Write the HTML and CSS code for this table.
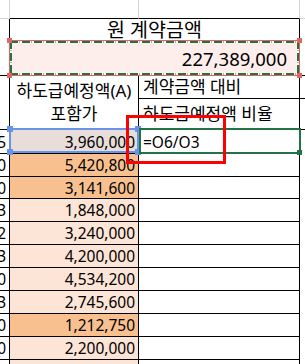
FILE: index.html
```html
<!DOCTYPE html>
<html lang="ko">
<head>
<meta charset="utf-8">
<link rel="stylesheet" href="styles.css">
</head>
<body>
<div class="sheet">
  <div class="grid">
    <div class="c top t0"></div>
    <div class="c top t1"></div>
    <div class="c top t2"></div>
    <div class="c top t3"></div>

    <div class="c lead r2"></div>
    <div class="c title span2">원 계약금액</div>
    <div class="c edge r2"></div>
    <div class="c total span2"><span class="big">227,389,000</span></div>

    <div class="c lead r2"></div>
    <div class="c head r2">하도급예정액(A)<br>포함가</div>
    <div class="c sub">계약금액 대비</div>
    <div class="c edge"></div>
    <div class="c sub">하도급예정액 비율</div>
    <div class="c edge"></div>

    <div class="c lead num">5</div><div class="c amt sel">3,960,000</div><div class="c sub formula">=O6/O3</div><div class="c side"></div>
    <div class="c lead num">0</div><div class="c amt dark">5,420,800</div><div class="c"></div><div class="c side"></div>
    <div class="c lead num">0</div><div class="c amt dark">3,141,600</div><div class="c"></div><div class="c side"></div>
    <div class="c lead num">3</div><div class="c amt light">1,848,000</div><div class="c"></div><div class="c side"></div>
    <div class="c lead num">2</div><div class="c amt light">3,240,000</div><div class="c"></div><div class="c side"></div>
    <div class="c lead num">3</div><div class="c amt light">4,200,000</div><div class="c"></div><div class="c side"></div>
    <div class="c lead num">0</div><div class="c amt light">4,534,200</div><div class="c"></div><div class="c side"></div>
    <div class="c lead num">3</div><div class="c amt light">2,745,600</div><div class="c"></div><div class="c side"></div>
    <div class="c lead num">0</div><div class="c amt dark">1,212,750</div><div class="c"></div><div class="c side"></div>
    <div class="c lead num">0</div><div class="c amt light">2,200,000</div><div class="c"></div><div class="c side"></div>
    <div class="c lead num"></div><div class="c amt light"></div><div class="c"></div><div class="c side"></div>
  </div>

  <div class="copy">
    <span class="hd hd-tl"></span><span class="hd hd-tr"></span>
    <span class="hd hd-bl"></span><span class="hd hd-br"></span>
  </div>
  <div class="ref">
    <span class="bh bh-tl"></span><span class="bh bh-tr"></span>
    <span class="bh bh-bl"></span><span class="bh bh-br"></span>
  </div>
  <div class="active"><span class="fill"></span></div>
  <div class="mark"></div>
</div>
</body>
</html>
```

FILE: styles.css
```css
html, body {
  margin: 0;
  padding: 0;
  background: #fff;
}
body {
  font-family: "Noto Sans", "Noto Sans CJK KR", sans-serif;
  color: #000;
}
.sheet {
  position: relative;
  width: 305px;
  height: 364px;
  overflow: hidden;
}
.grid {
  display: grid;
  grid-template-columns: 10px 129px 161px 5px;
  grid-template-rows: 19px 23px 34px 23px 31px 24px 23px 22px 23px 23px 23px 23px 23px 23px 23px 23px;
}
.c {
  box-sizing: border-box;
  display: flex;
  align-items: center;
  overflow: hidden;
  white-space: nowrap;
  border-right: 1px solid #000;
  border-bottom: 1px solid #000;
  font-size: 15.5px;
  line-height: 20px;
}
.top { border-color: #d4d4d4; }
.t1, .t2 { border-bottom-color: #000; }
.t3 { border-right: 0; }
.r2 { grid-row: span 2; }
.span2 { grid-column: span 2; }
.edge { border-right: 0; }
.side { border-right: 0; border-bottom: 0; }
.c.title {
  justify-content: center;
  font-size: 19.5px;
  line-height: 20px;
  overflow: visible;
}
.c.total {
  justify-content: flex-end;
  padding-right: 12px;
  background: #fdeeec;
}
.big {
  font-size: 18.5px;
  line-height: 24px;
}
.c.head {
  flex-direction: column;
  justify-content: center;
  text-align: center;
  font-size: 17px;
  line-height: 23px;
  padding-bottom: 1px;
}
.c.sub {
  padding-left: 4px;
  font-size: 17px;
}
.c.formula { font-size: 15.5px; }
.num, .amt {
  justify-content: flex-end;
  padding-right: 3px;
}
.dark { background: #f8c08f; }
.light { background: #fce4d6; }
.sel { background: #e8ddd9; }

/* copy marquee around the merged total cell */
.copy {
  position: absolute;
  left: 9px;
  top: 40px;
  width: 291px;
  height: 36px;
  box-sizing: border-box;
  border: 1px solid #e0625f;
  background:
    repeating-linear-gradient(90deg, #217346 0 8px, #fff 8px 9px, #b0b0b0 9px 10px, #fff 10px 12px) top left / 100% 2px no-repeat,
    repeating-linear-gradient(90deg, #217346 0 8px, #fff 8px 9px, #b0b0b0 9px 10px, #fff 10px 12px) bottom left / 100% 2px no-repeat,
    repeating-linear-gradient(180deg, #217346 0 8px, #fff 8px 9px, #b0b0b0 9px 10px, #fff 10px 12px) top left / 2px 100% no-repeat,
    repeating-linear-gradient(180deg, #217346 0 8px, #fff 8px 9px, #b0b0b0 9px 10px, #fff 10px 12px) top right / 2px 100% no-repeat;
}
.hd {
  position: absolute;
  width: 5px;
  height: 5px;
  background: #e06666;
}
.hd-tl { left: -3px; top: -3px; }
.hd-tr { right: -3px; top: -3px; }
.hd-bl { left: -3px; bottom: -3px; }
.hd-br { right: -3px; bottom: -3px; }

/* formula reference highlight */
.ref {
  position: absolute;
  left: 9px;
  top: 128px;
  width: 130px;
  height: 25px;
  box-sizing: border-box;
  border: 2px solid #6893e8;
}
.bh {
  position: absolute;
  width: 6px;
  height: 6px;
  background: #6893e8;
}
.bh-tl { left: -4px; top: -4px; }
.bh-tr { right: -4px; top: -4px; }
.bh-bl { left: -4px; bottom: -4px; }
.bh-br { right: -4px; bottom: -4px; }

/* active cell */
.active {
  position: absolute;
  left: 139px;
  top: 128px;
  width: 162px;
  height: 26px;
  box-sizing: border-box;
  border: 2px solid #217346;
}
.fill {
  position: absolute;
  right: -3px;
  bottom: -3px;
  width: 5px;
  height: 5px;
  background: #217346;
}

/* red annotation box */
.mark {
  position: absolute;
  left: 126px;
  top: 115px;
  width: 100px;
  height: 49px;
  box-sizing: border-box;
  border: 3px solid #ff0000;
}
```
